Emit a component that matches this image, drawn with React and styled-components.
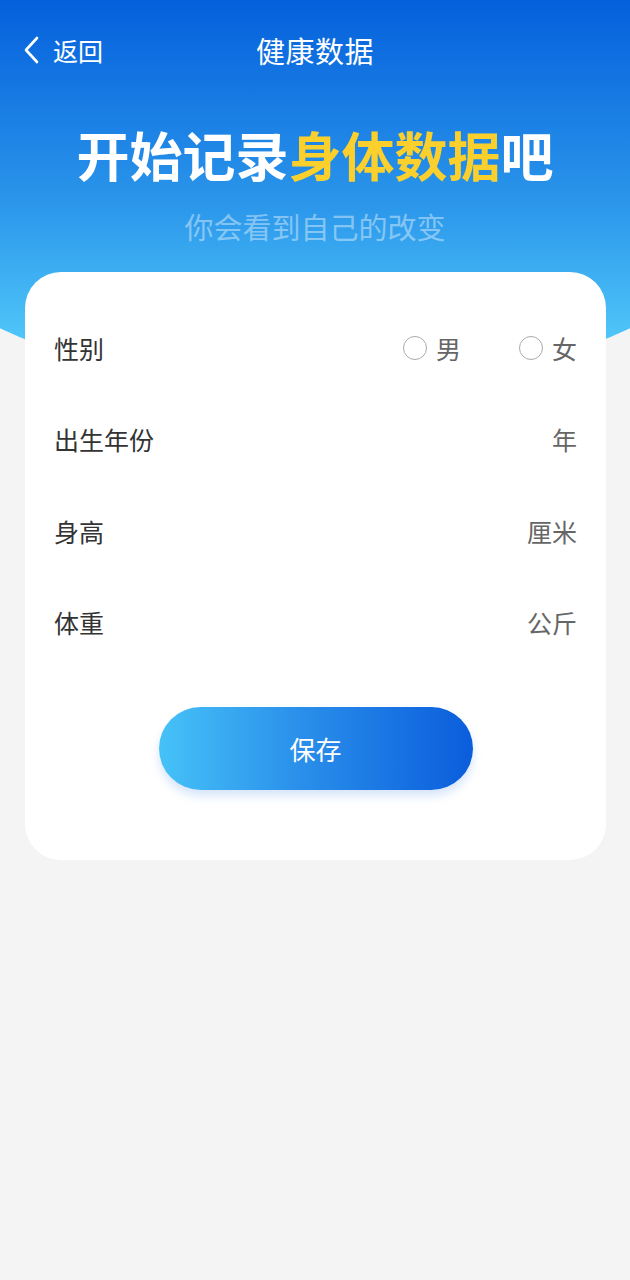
import React, { useState } from 'react'
import styled, { createGlobalStyle } from 'styled-components'

const GlobalStyle = createGlobalStyle`
  body {
    margin: 0;
    background: #f4f4f4;
    font-family: 'Noto Sans CJK SC', 'Noto Sans', sans-serif;
  }
`
const Page = styled.div`
  width: 100%;
  min-height: 1280px;
  overflow: hidden;
  background: #f4f4f4;
`
const Hero = styled.header`
  width: 140%;
  margin-left: -20%;
  padding: 0 20%;
  height: 390px;
  box-sizing: border-box;
  background: linear-gradient(180deg, #0560dc 0px, #2a95ea 200px, #4fc6f9 340px);
  border-radius: 0 0 50% 50% / 0 0 206px 206px;
  color: #fff;
`
const NavBar = styled.nav`
  height: 100px;
  display: flex;
  align-items: center;
  justify-content: center;
  position: relative;
`
const BackButton = styled.button`
  position: absolute;
  left: 22px;
  top: 50%;
  transform: translateY(-50%);
  display: flex;
  align-items: center;
  gap: 11px;
  background: transparent;
  border: none;
  padding: 0;
  color: #fff;
  font-family: inherit;
  font-size: 25px;
  cursor: pointer;
`
const NavTitle = styled.h1`
  margin: 0;
  font-size: 29px;
  font-weight: 400;
  letter-spacing: 0.5px;
`
const Headline = styled.h2`
  margin: 19px 0 0;
  text-align: center;
  font-size: 53px;
  line-height: 70px;
  font-weight: 700;
`
const Highlight = styled.span`
  color: #fbd02c;
`
const Subline = styled.p`
  margin: 17px 0 0;
  text-align: center;
  font-size: 29px;
  line-height: 40px;
  color: rgba(255, 255, 255, 0.42);
`
const Card = styled.section`
  margin: -118px 24px 0 25px;
  background: #fff;
  border-radius: 36px;
  padding: 30px 29px 70px;
  position: relative;
`
const Row = styled.div`
  height: 91.5px;
  display: flex;
  align-items: center;
  justify-content: space-between;
`
const Label = styled.span`
  font-size: 25px;
  color: #333;
`
const Unit = styled.span`
  font-size: 25px;
  color: #666;
`
const RadioGroup = styled.div`
  display: flex;
  gap: 58px;
`
const RadioOption = styled.label`
  display: flex;
  align-items: center;
  gap: 9px;
  font-size: 25px;
  color: #666;
  cursor: pointer;
`
const RadioDot = styled.span`
  width: 22px;
  height: 22px;
  border-radius: 50%;
  border: 1.6px solid ${({ checked }) => (checked ? '#1e7fe6' : '#aaa')};
  box-sizing: content-box;
  background: ${({ checked }) =>
    checked ? 'radial-gradient(circle, #1e7fe6 0 5px, #fff 6px)' : '#fff'};
`
const SaveButton = styled.button`
  display: block;
  margin: 39px auto 0;
  width: 314px;
  height: 83px;
  border: none;
  border-radius: 42px;
  background: linear-gradient(90deg, #46c2f8 0%, #2a8fea 45%, #0a5ddc 100%);
  box-shadow: 0 6px 10px rgba(30, 110, 220, 0.18);
  color: #fff;
  font-family: inherit;
  font-size: 26px;
  cursor: pointer;
`

const fields = [
  { label: '出生年份', unit: '年' },
  { label: '身高', unit: '厘米' },
  { label: '体重', unit: '公斤' }
]

function App() {
  const [gender, setGender] = useState(null)

  return (
    <Page>
      <GlobalStyle />
      <Hero>
        <NavBar>
          <BackButton type='button'>
            <svg width='20' height='28' viewBox='0 0 20 28'>
              <path d='M15 2 L4 14 L15 26' fill='none' stroke='#fff' strokeWidth='2.6' strokeLinecap='round' strokeLinejoin='round' />
            </svg>
            返回
          </BackButton>
          <NavTitle>健康数据</NavTitle>
        </NavBar>
        <Headline>
          开始记录<Highlight>身体数据</Highlight>吧
        </Headline>
        <Subline>你会看到自己的改变</Subline>
      </Hero>
      <Card>
        <Row>
          <Label>性别</Label>
          <RadioGroup>
            {['男', '女'].map((g) => (
              <RadioOption key={g} onClick={() => setGender(g)}>
                <RadioDot checked={gender === g} />
                {g}
              </RadioOption>
            ))}
          </RadioGroup>
        </Row>
        {fields.map((f) => (
          <Row key={f.label}>
            <Label>{f.label}</Label>
            <Unit>{f.unit}</Unit>
          </Row>
        ))}
        <SaveButton type='button'>保存</SaveButton>
      </Card>
    </Page>
  )
}

export default App
